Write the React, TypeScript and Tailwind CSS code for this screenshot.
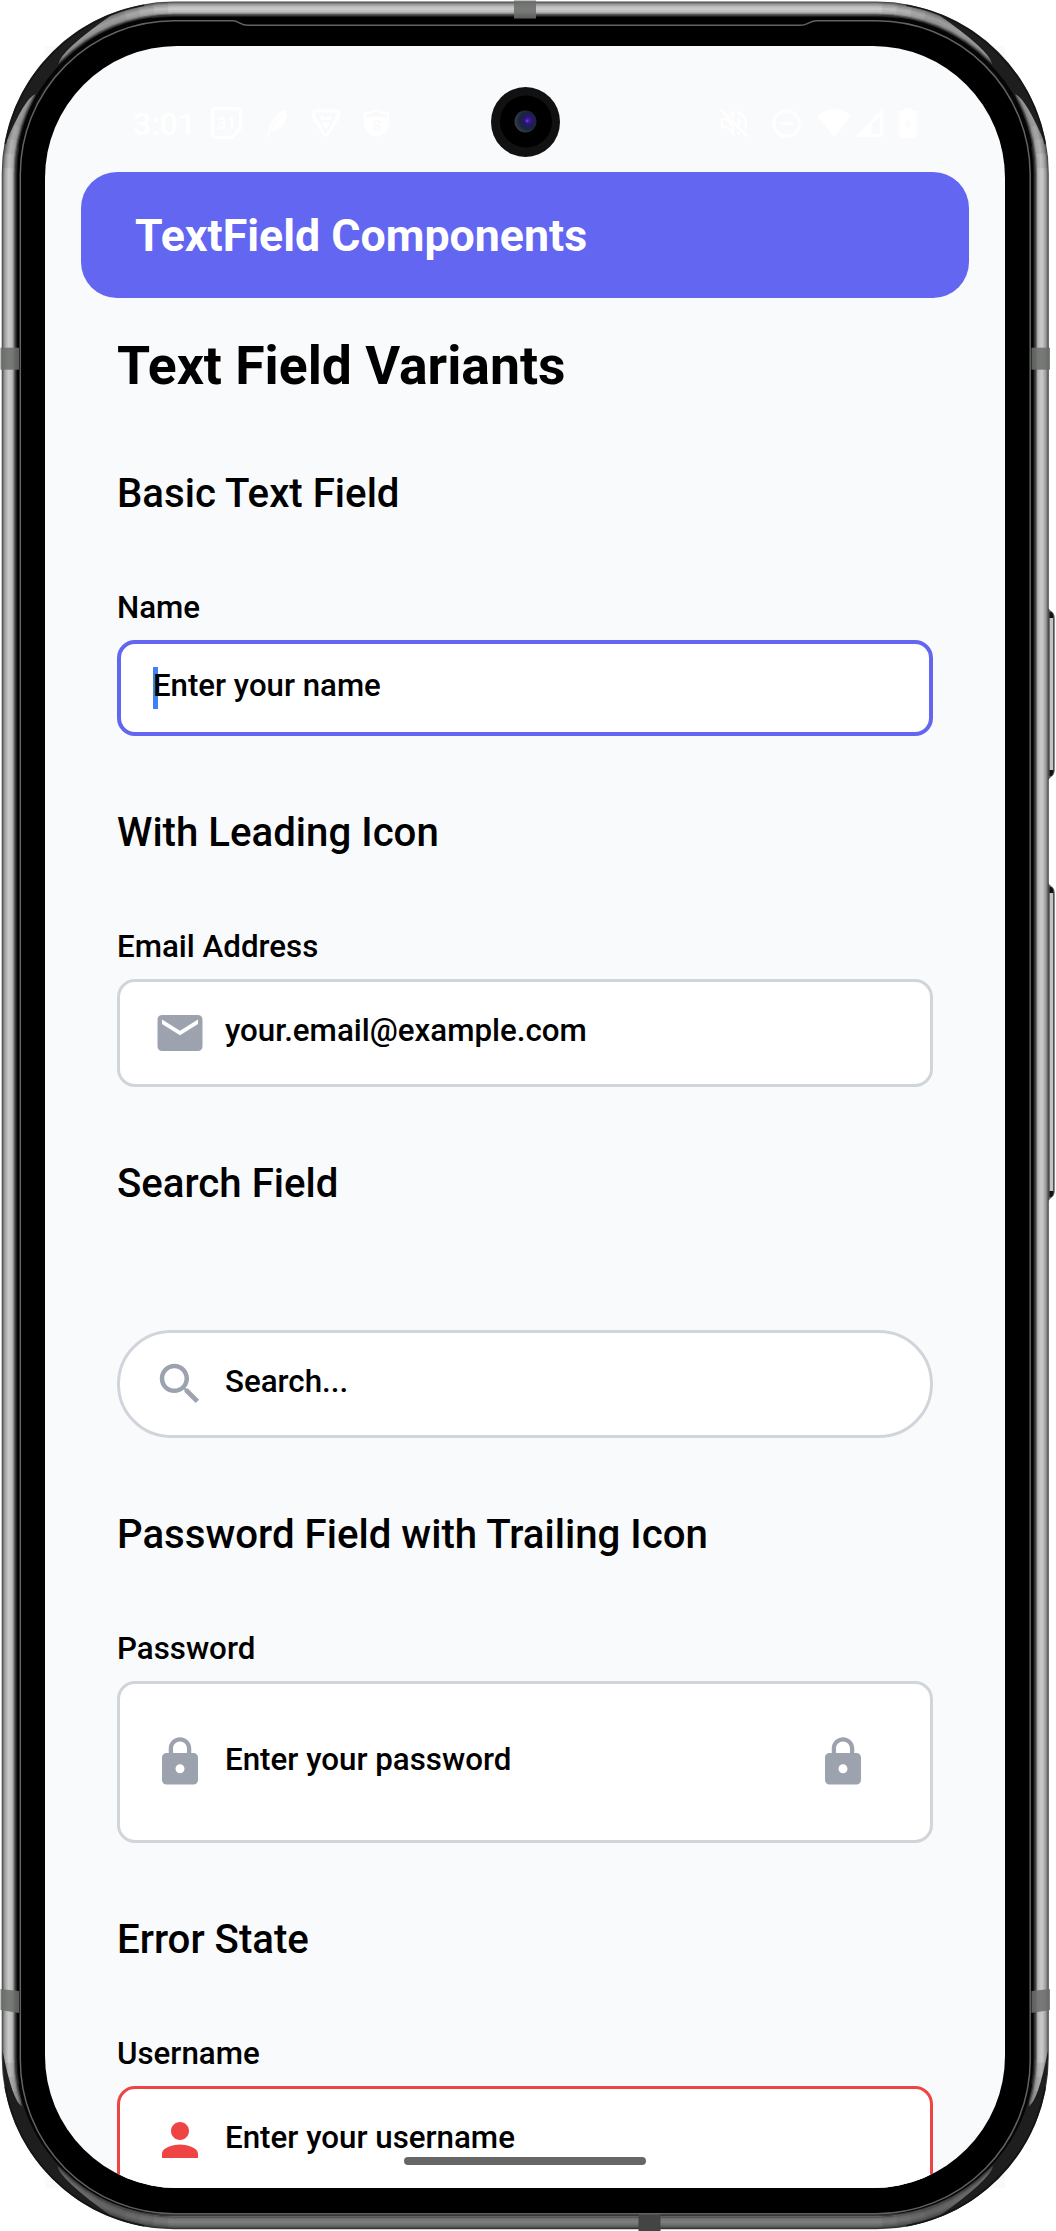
import type { ReactNode } from "react";

const RINGS: [number, string][] = [
  [0, "#4a4a4a"],
  [1, "#737373"],
  [2, "#8f8f8f"],
  [3, "#a6a6a6"],
  [4.5, "#bababa"],
  [6, "#c8c8c8"],
  [8.5, "#bfbfbf"],
  [10.5, "#a8a8a8"],
  [11.8, "#6e6e6e"],
  [13, "#3a3a3a"],
  [14.5, "#1a1a1a"],
  [15.5, "#000000"],
];

const CX = 174;
const CY = 174;

function polar(r: number, deg: number) {
  const a = (deg * Math.PI) / 180;
  return `${(CX - r * Math.cos(a)).toFixed(2)} ${(CY - r * Math.sin(a)).toFixed(2)}`;
}

function arc(r: number, from: number, to: number) {
  return `M${polar(r, from)}A${r} ${r} 0 0 1 ${polar(r, to)}`;
}

function Corner({ split }: { split: [number, number] }) {
  const [a, b] = split;
  const wedge = [
    `M${polar(171.5, a - 20)}`,
    `A171.5 171.5 0 0 1 ${polar(171.5, b + 26)}`,
    `Q${polar(167.5, b + 4)} ${polar(159.5, b)}`,
    `L${polar(157, b + 5)}`,
    `L${polar(155, b + 5)}`,
    `A155 155 0 0 0 ${polar(155, a - 5)}`,
    `L${polar(157.5, a - 4)}`,
    `L${polar(160, a)}`,
    `Q${polar(167.5, a - 3)} ${polar(171.5, a - 20)}Z`,
  ].join("");
  return (
    <g fill="none">
      {[0, 5, 10, 15].map((d) => (
        <path key={d} d={arc(164.5, 2 + d, 88 - d)} stroke="#000" strokeOpacity="0.06" strokeWidth="15" />
      ))}
      <path d={wedge} fill="#1e1e1e" />
      <path d={arc(171.3, 10, 80)} stroke="#111" strokeOpacity="0.85" strokeWidth="1.6" />
      <path d={arc(156.6, 10, 82)} stroke="#050505" strokeWidth="3" />
    </g>
  );
}

function SideButton({ y, h }: { y: number; h: number }) {
  return (
    <g>
      <path d={`M1048 ${y}l3 3q3.7 2 3.7 7v${h - 20}q0 5-3.7 7l-3 3z`} fill="#5a5a5a" />
      <path d={`M1049.5 ${y + 4}h1.5q2.5 1 2.5 7v${h - 22}q0 6-2.5 7h-1.5z`} fill="#111" />
      <rect x="1049.6" y={y + 10} width="3.6" height={h - 20} fill="#c4c4c4" />
    </g>
  );
}

function PhoneFrame() {
  return (
    <svg className="absolute inset-0" width="1056" height="2231" viewBox="0 0 1056 2231" aria-hidden="true">
      <defs>
        <linearGradient id="bottomShade" x1="0" y1="0" x2="0" y2="1">
          <stop offset="0" stopColor="#000" stopOpacity="0" />
          <stop offset="1" stopColor="#000" stopOpacity="0.38" />
        </linearGradient>
      </defs>
      <SideButton y={608} h={172} />
      <SideButton y={883} h={318} />
      {RINGS.map(([o, c]) => (
        <rect key={o} x={1.7 + o} y={1.6 + o} width={1047.1 - 2 * o} height={2227.6 - 2 * o} rx={172 - o} fill={c} />
      ))}
      <path
        d="M8 2057A166 166 0 0 0 174 2223H877A166 166 0 0 0 1042.5 2057"
        fill="none"
        stroke="url(#bottomShade)"
        strokeWidth="12"
      />
      <Corner split={[30, 43.5]} />
      <g transform="translate(1050.5 0) scale(-1 1)">
        <Corner split={[30, 43.5]} />
      </g>
      <g transform="translate(0 2231) scale(1 -1)">
        <Corner split={[18, 43]} />
      </g>
      <g transform="translate(1050.5 2231) scale(-1 -1)">
        <Corner split={[18, 43]} />
      </g>
      <g fill="#6b6e6b" fillOpacity="0.88">
        <rect x="514" y="0.5" width="22" height="18" />
        <rect x="0.5" y="347.7" width="18.5" height="22" />
        <rect x="1031.5" y="347.7" width="18.5" height="22" />
        <path d="M0.5 1989l18.5 2v22l-18.5-3z" />
        <path d="M1050 1989l-18.5 2v22l18.5-3z" />
      </g>
      <rect x="638.5" y="2213.5" width="22" height="17.5" fill="#444" />
      <path
        d="M20.3 174A153.7 153.7 0 0 1 174 20.8H233C239 20.8 240 25.3 248 25.3H800C808 25.3 809 20.8 817 20.8H876.5A153.7 153.7 0 0 1 1030.2 174V2060A153.7 153.7 0 0 1 876.5 2213.7H174A153.7 153.7 0 0 1 20.3 2060Z"
        fill="#000"
        stroke="#626262"
        strokeWidth="1.5"
      />
    </svg>
  );
}

function Camera() {
  return (
    <svg className="absolute left-[446px] top-[40.5px]" width="69" height="70" viewBox="0 0 69 70" aria-hidden="true">
      <defs>
        <radialGradient id="lens" cx="0.62" cy="0.45" r="0.6">
          <stop offset="0" stopColor="#4a1fc4" />
          <stop offset="0.3" stopColor="#2a1668" />
          <stop offset="0.65" stopColor="#16263f" />
          <stop offset="1" stopColor="#3a3a40" />
        </radialGradient>
      </defs>
      <ellipse cx="34.5" cy="35" rx="34.5" ry="35" fill="#111" />
      <circle cx="35" cy="34.5" r="26" fill="#000" />
      <circle cx="34.5" cy="34.5" r="11" fill="url(#lens)" />
      <circle cx="36" cy="34" r="1.4" fill="#6430ee" />
    </svg>
  );
}

function StatusBar() {
  return (
    <div className="flex h-[126px] items-start justify-between pl-[88px] pr-[88px] pt-[61px] text-white">
      <div className="flex h-8 items-center">
        <span className="w-[62px] pt-[2px] text-[32px] font-medium leading-8">3:01</span>
        <svg className="ml-4" width="31" height="32" viewBox="0 0 31 32" fill="none" aria-hidden="true">
          <path d="M4 1.5H27Q29.5 1.5 29.5 4V21L21 30.5H4Q1.5 30.5 1.5 28V4Q1.5 1.5 4 1.5Z" stroke="#fff" strokeWidth="3" />
          <text x="15.5" y="22" textAnchor="middle" fontSize="17" fontWeight="700" fill="#fff">31</text>
        </svg>
        <svg className="ml-6" width="22" height="29" viewBox="0 0 22 29" fill="#fff" aria-hidden="true">
          <path d="M1 28C2 18 7 4 20 1C22 5 20 12 15 18L9 21C6 22 4 24 2 28Z" />
          <path d="M3 24C7 15 11 10 16 6" stroke="#f9fafc" strokeWidth="1" fill="none" />
        </svg>
        <svg className="ml-[23px]" width="30" height="28" viewBox="0 0 30 28" fill="none" stroke="#fff" aria-hidden="true">
          <path d="M4 2H26Q29 4 27 8L17 25Q15 27 13 25L3 8Q1 4 4 2Z" strokeWidth="3" />
          <path d="M10 6l3 2h4l3-2v5H10zM11 14h8l-4 6z" fill="#fff" stroke="none" />
        </svg>
        <svg className="ml-[22px]" width="27" height="30" viewBox="0 0 27 30" aria-hidden="true">
          <path d="M1 4Q8 4 13.500 1Q19 4 26 4V17Q26 25 13.500 29Q1 25 1 17Z" fill="#fff" />
          <path d="M3 6Q9 5.500 13.500 3Q18 5.500 24 6V9H3Z" fill="#f9fafc" />
          <text x="13.500" y="23" textAnchor="middle" fontSize="14" fontWeight="700" fill="#f9fafc">S</text>
        </svg>
      </div>
      <div className="flex h-8 items-center">
        <svg width="28" height="28" viewBox="0 0 28 28" fill="none" stroke="#fff" strokeWidth="2.600" aria-hidden="true">
          <path d="M1 1L27 27" />
          <path d="M2 10V18H7L13 24V17L6 10ZM13 9V4L11 6M18 9Q20 12 19 16M17 3Q29 8 25 20M17 25L20 24" />
        </svg>
        <svg className="ml-6" width="29" height="29" viewBox="0 0 29 29" fill="none" stroke="#fff" strokeWidth="3" aria-hidden="true">
          <circle cx="14.500" cy="14.500" r="12.800" />
          <path d="M8 14.500H21" />
        </svg>
        <svg className="ml-4" width="34" height="28" viewBox="0 0 34 28" fill="#fff" aria-hidden="true">
          <path d="M0 7Q17-7 34 7L17 28Z" />
        </svg>
        <svg className="ml-1" width="28" height="28" viewBox="0 0 28 28" aria-hidden="true">
          <path d="M0 28L28 0V28Z" fill="#fff" />
          <path d="M16.500 15L25 7V25H16.500Z" fill="#f9fafc" />
        </svg>
        <svg className="ml-4" width="18" height="30" viewBox="0 0 18 30" aria-hidden="true">
          <path d="M5 0H13V3H16Q18 3 18 5V28Q18 30 16 30H2Q0 30 0 28V5Q0 3 2 3H5Z" fill="#fff" />
          <path d="M11 9L5 18H8.500L7 24L13 15H9.500Z" fill="#f9fafc" />
        </svg>
      </div>
    </div>
  );
}

const PATHS = {
  mail: "M20 4H4c-1.1 0-1.990.9-1.990 2L2 18c0 1.100.9 2 2 2h16c1.100 0 2-.9 2-2V6c0-1.100-.9-2-2-2zm0 4l-8 5-8-5V6l8 5 8-5v2z",
  search:
    "M15.500 14h-.790l-.280-.270C15.410 12.590 16 11.110 16 9.500 16 5.910 13.090 3 9.500 3S3 5.910 3 9.500 5.910 16 9.500 16c1.610 0 3.090-.590 4.230-1.570l.270.280v.790l5 4.990L20.490 19l-4.990-5zm-6 0C7.010 14 5 11.990 5 9.500S7.010 5 9.500 5 14 7.010 14 9.500 11.990 14 9.500 14z",
  lock: "M18 8h-1V6c0-2.760-2.240-5-5-5S7 3.240 7 6v2H6c-1.100 0-2 .9-2 2v10c0 1.100.9 2 2 2h12c1.100 0 2-.9 2-2V10c0-1.100-.9-2-2-2zm-6 9c-1.100 0-2-.9-2-2s.9-2 2-2 2 .9 2 2-.9 2-2 2zm3.100-9H8.900V6c0-1.710 1.390-3.100 3.100-3.100 1.710 0 3.100 1.390 3.100 3.100v2z",
  person: "M12 12c2.210 0 4-1.790 4-4s-1.790-4-4-4-4 1.790-4 4 1.790 4 4 4zm0 2c-2.670 0-8 1.340-8 4v2h16v-2c0-2.660-5.330-4-8-4z",
};

function Icon({ name, className }: { name: keyof typeof PATHS; className: string }) {
  return (
    <svg className={className} width="54" height="54" viewBox="0 0 24 24" fill="currentColor" aria-hidden="true">
      <path d={PATHS[name]} />
    </svg>
  );
}

function Section({ title, label, children }: { title: string; label?: string; children: ReactNode }) {
  return (
    <section className="mt-[69px] first-of-type:mt-16">
      <h2 className="h-14 whitespace-nowrap text-[40.2px] font-[550] leading-[56px]">{title}</h2>
      <div className="mb-3 mt-[66px] h-10 text-[31.3px] font-medium leading-10">{label}</div>
      {children}
    </section>
  );
}

function Field({
  icon,
  trailing,
  placeholder,
  box,
  iconColor = "text-[#9ca3af]",
}: {
  icon: keyof typeof PATHS;
  trailing?: keyof typeof PATHS;
  placeholder: string;
  box: string;
  iconColor?: string;
}) {
  return (
    <div className={`flex items-center border-[3px] bg-white pl-[33px] pr-[60px] ${box}`}>
      <Icon name={icon} className={`shrink-0 ${iconColor}`} />
      <span className="ml-[18px] flex-1 pb-[5px] text-[31.3px] font-medium leading-10">{placeholder}</span>
      {trailing && <Icon name={trailing} className={`shrink-0 ${iconColor}`} />}
    </div>
  );
}

export default function App() {
  return (
    <div className="relative h-[2231px] w-[1056px] overflow-hidden bg-white pl-[45px] pt-[46px] font-['Roboto',sans-serif] text-black antialiased">
      <div className="absolute left-[45px] top-[46px] h-[2142px] w-[960px] bg-[#fafafc]" />
      <PhoneFrame />
      <div className="relative h-[2142px] w-[960px] overflow-hidden rounded-[132px] bg-[#f9fafc]">
        <StatusBar />
        <Camera />
        <header className="mx-9 flex h-[126px] items-center rounded-[36px] bg-[#6366f1] pl-[54px] pt-[3px]">
          <h1 className="text-[44.7px] font-bold leading-none text-white">TextField Components</h1>
        </header>
        <main className="px-[72px] pt-8">
          <div className="h-[72px] text-[53.5px] font-bold leading-[72px]">Text Field Variants</div>
          <Section title="Basic Text Field" label="Name">
            <div className="relative flex h-24 items-center rounded-[18px] border-4 border-[#6366f1] bg-white pl-8">
              <span className="absolute left-8 top-[23px] h-[42px] w-[4.500px] bg-[#3b82f6]" />
              <span className="relative pb-[5px] text-[31.2px] font-medium leading-10">Enter your name</span>
            </div>
          </Section>
          <Section title="With Leading Icon" label="Email Address">
            <Field icon="mail" placeholder="your.email@example.com" box="h-[108px] rounded-[18px] border-[#d1d5db]" />
          </Section>
          <Section title="Search Field">
            <Field icon="search" placeholder="Search..." box="h-[108px] rounded-[54px] border-[#d1d5db]" />
          </Section>
          <Section title="Password Field with Trailing Icon" label="Password">
            <Field icon="lock" trailing="lock" placeholder="Enter your password" box="h-[162px] rounded-[18px] border-[#d1d5db]" />
          </Section>
          <Section title="Error State" label="Username">
            <Field
              icon="person"
              placeholder="Enter your username"
              box="h-[108px] rounded-[18px] border-[#ef4444]"
              iconColor="text-[#ef4444]"
            />
          </Section>
        </main>
        <div className="absolute left-[359px] top-[2111px] h-2 w-[242px] rounded-full bg-[#666]" />
      </div>
    </div>
  );
}
